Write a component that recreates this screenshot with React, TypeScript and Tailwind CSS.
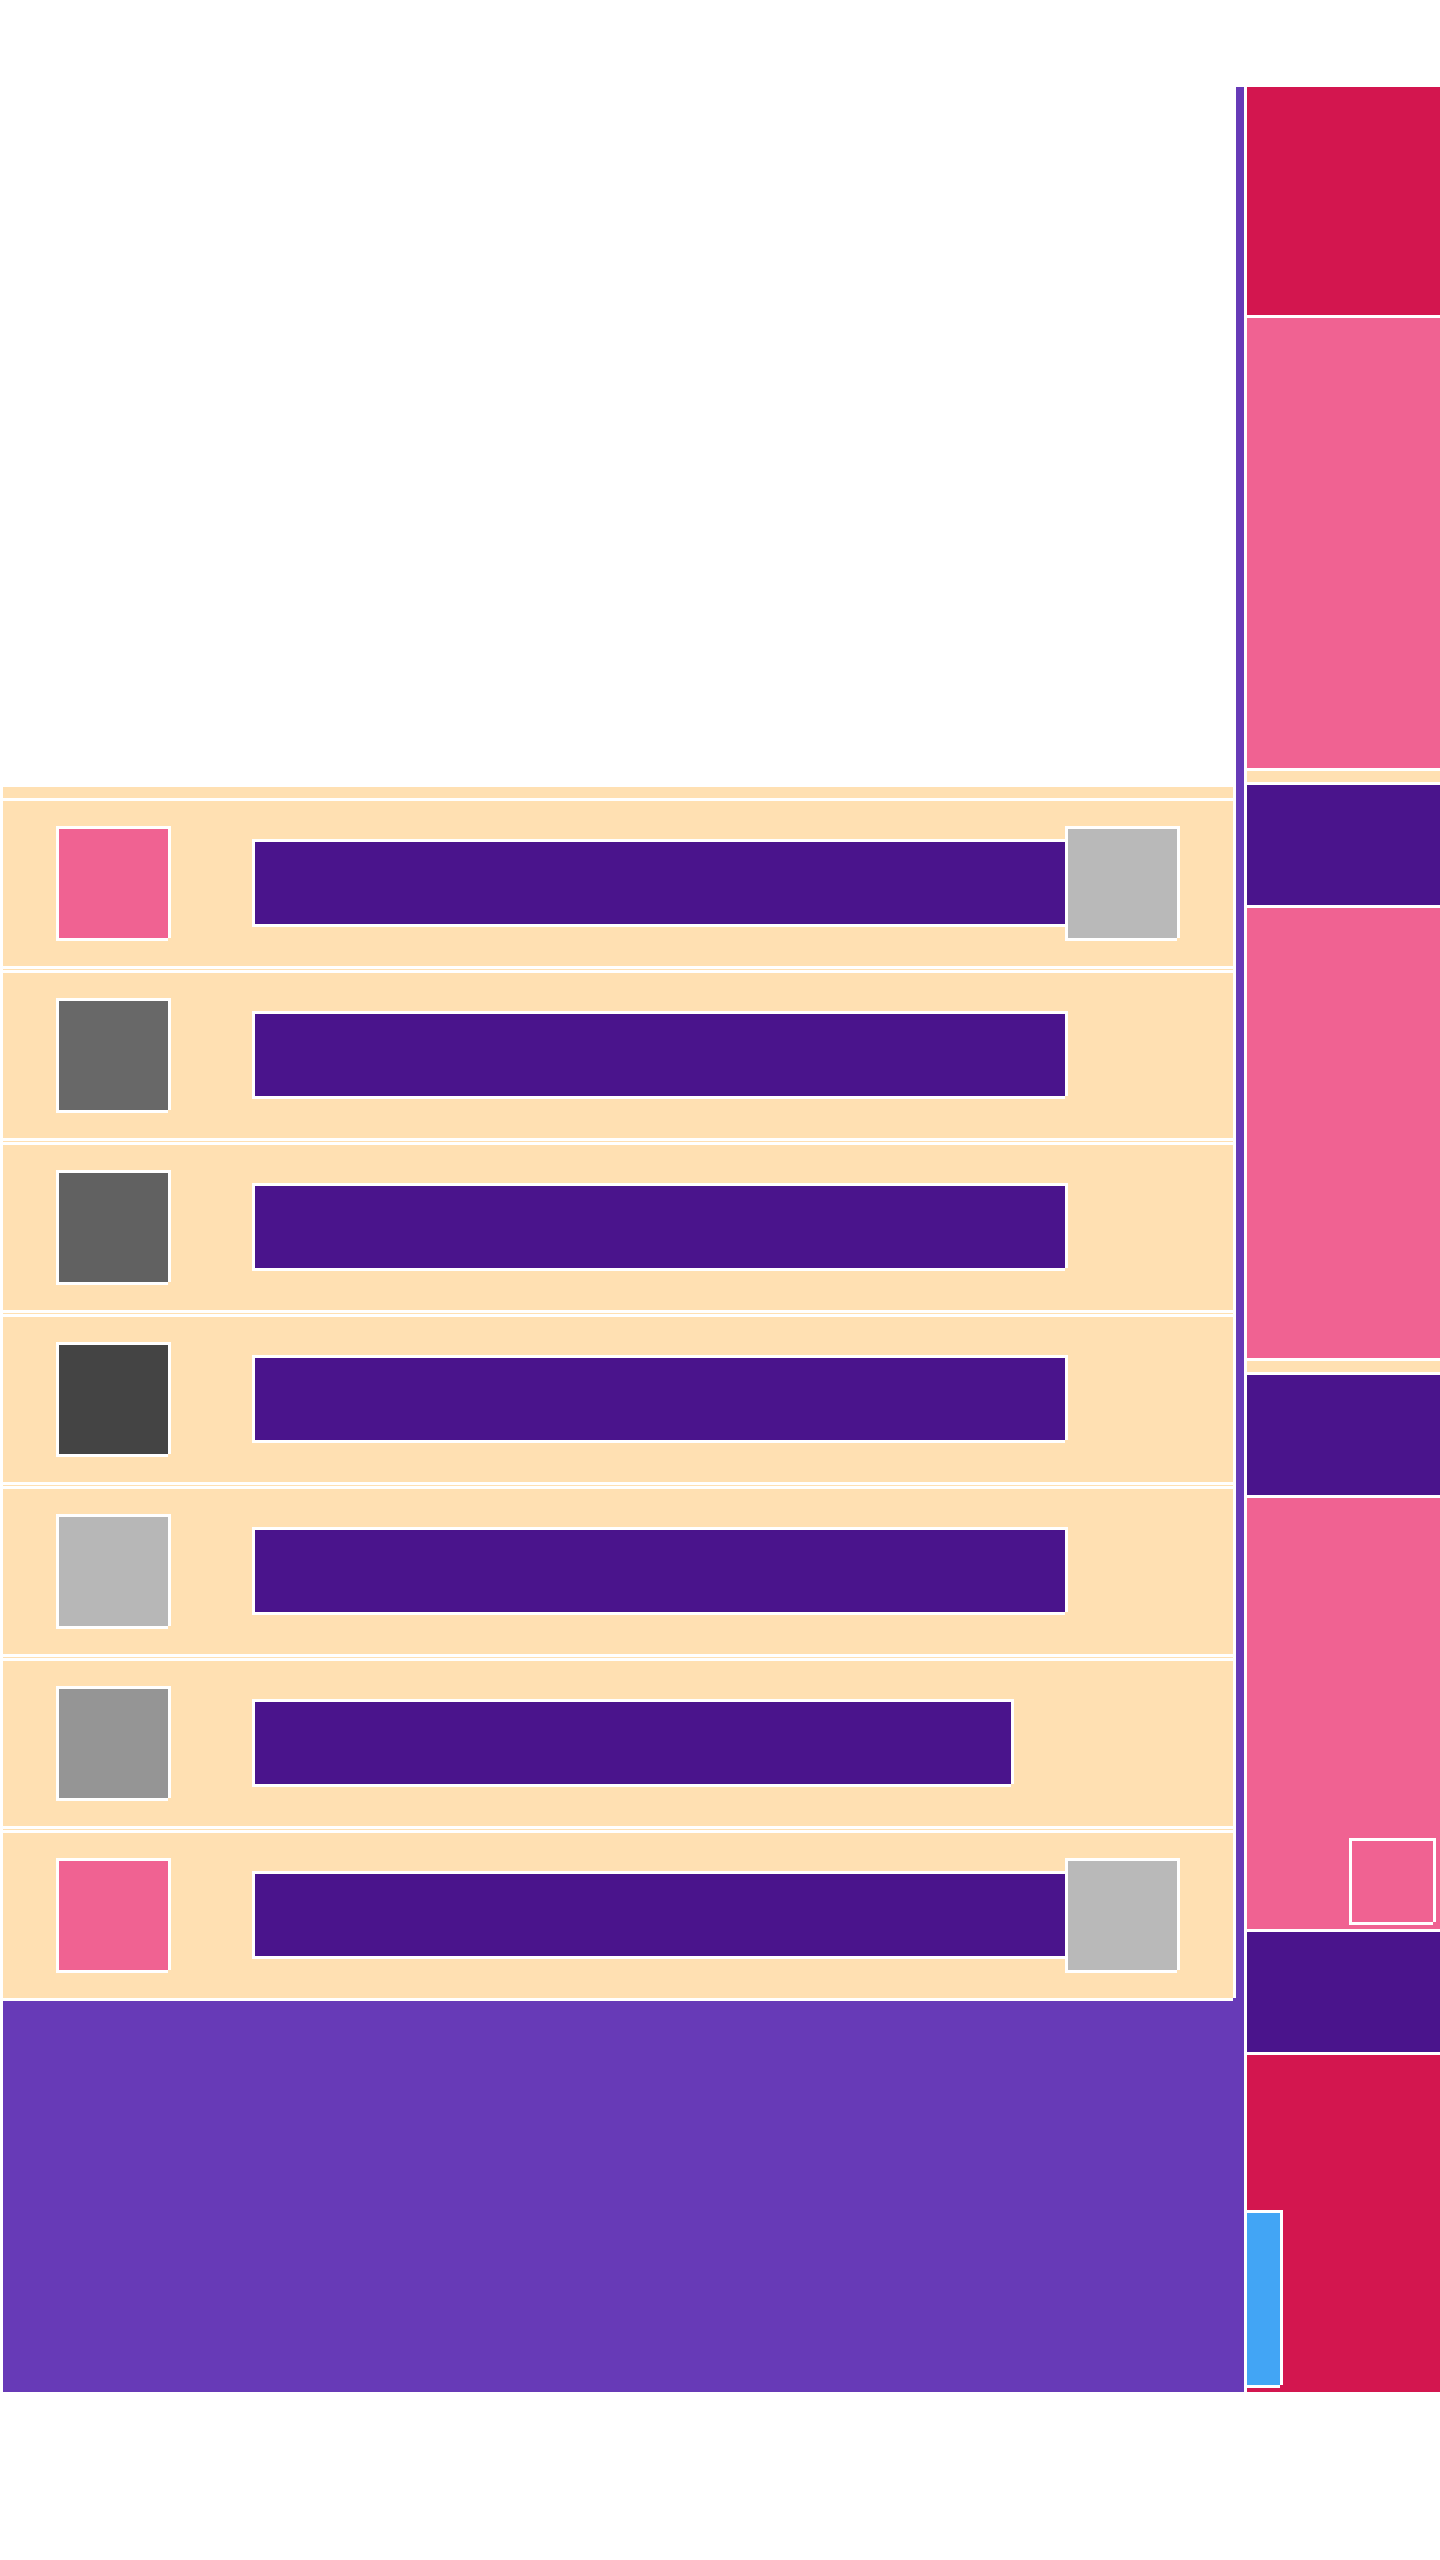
import React from "react";

const rows: { sq: string; bar: number; right?: boolean }[] = [
  { sq: "bg-[#F06292]", bar: 813, right: true },
  { sq: "bg-[#686868]", bar: 813 },
  { sq: "bg-[#616161]", bar: 813 },
  { sq: "bg-[#444444]", bar: 813 },
  { sq: "bg-[#b7b7b7]", bar: 813 },
  { sq: "bg-[#959595]", bar: 759 },
  { sq: "bg-[#F06292]", bar: 813, right: true },
];

function Row({ sq, bar, right }: { sq: string; bar: number; right?: boolean }) {
  return (
    <div className="h-[171px] border-y-[3px] border-white bg-[#FFE0B2] flex items-start pl-[53px]">
      <div
        className={`w-[112px] h-[112px] mt-[25px] border-t-[3px] border-l-[3px] border-white shadow-[3px_0_0_#fff,0_3px_0_#fff] ${sq}`}
      />
      <div
        className={`${bar === 813 ? "w-[813px]" : "w-[759px]"} h-[85px] mt-[38px] ml-[84px] border-t-[3px] border-l-[3px] border-white shadow-[3px_0_0_#fff,0_3px_0_#fff] bg-[#4A148C]`}
      />
      {right && (
        <div className="w-[112px] h-[112px] mt-[25px] border-t-[3px] border-l-[3px] border-white shadow-[3px_0_0_#fff,0_3px_0_#fff] bg-[#b9b9b9]" />
      )}
    </div>
  );
}

export default function App() {
  return (
    <div className="w-[1440px] min-h-[2560px] bg-white pt-[87px] pl-[3px] flex items-start">
      <div className="w-[1241px] h-[2305px] bg-[#673AB7] flex">
        <div className="w-[1233px] flex flex-col">
          <div className="h-[700px] bg-white" />
          <div className="flex items-start">
            <div className="w-[1230px] bg-[#FFE0B2] pt-[11px] flex flex-col gap-[1px]">
              {rows.map((r, i) => (
                <Row key={i} {...r} />
              ))}
            </div>
            <div className="w-[3px] h-[1211px] bg-white" />
          </div>
        </div>
      </div>
      <div className="w-[3px] h-[2305px] bg-white" />
      <div className="w-[193px] h-[2305px] bg-white flex flex-col gap-[3px]">
        <div className="h-[228px] bg-[#D3164F]" />
        <div className="h-[450px] bg-[#F06292]" />
        <div className="h-[11px] bg-[#FFE0B2]" />
        <div className="h-[120px] bg-[#4A148C]" />
        <div className="h-[450px] bg-[#F06292]" />
        <div className="h-[11px] bg-[#FFE0B2]" />
        <div className="h-[120px] bg-[#4A148C]" />
        <div className="h-[431px] bg-[#F06292] relative">
          <div className="absolute right-[7px] bottom-[7px] w-[84px] h-[84px] bg-[#F06292] border-t-[3px] border-l-[3px] border-white shadow-[3px_0_0_#fff,0_3px_0_#fff]" />
        </div>
        <div className="h-[120px] bg-[#4A148C]" />
        <div className="h-[337px] bg-[#D3164F] relative">
          <div className="absolute left-0 bottom-[7px] w-[33px] h-[175px] bg-[#42A5F5] border-t-[3px] border-white shadow-[3px_0_0_#fff,0_3px_0_#fff]" />
        </div>
      </div>
    </div>
  );
}
